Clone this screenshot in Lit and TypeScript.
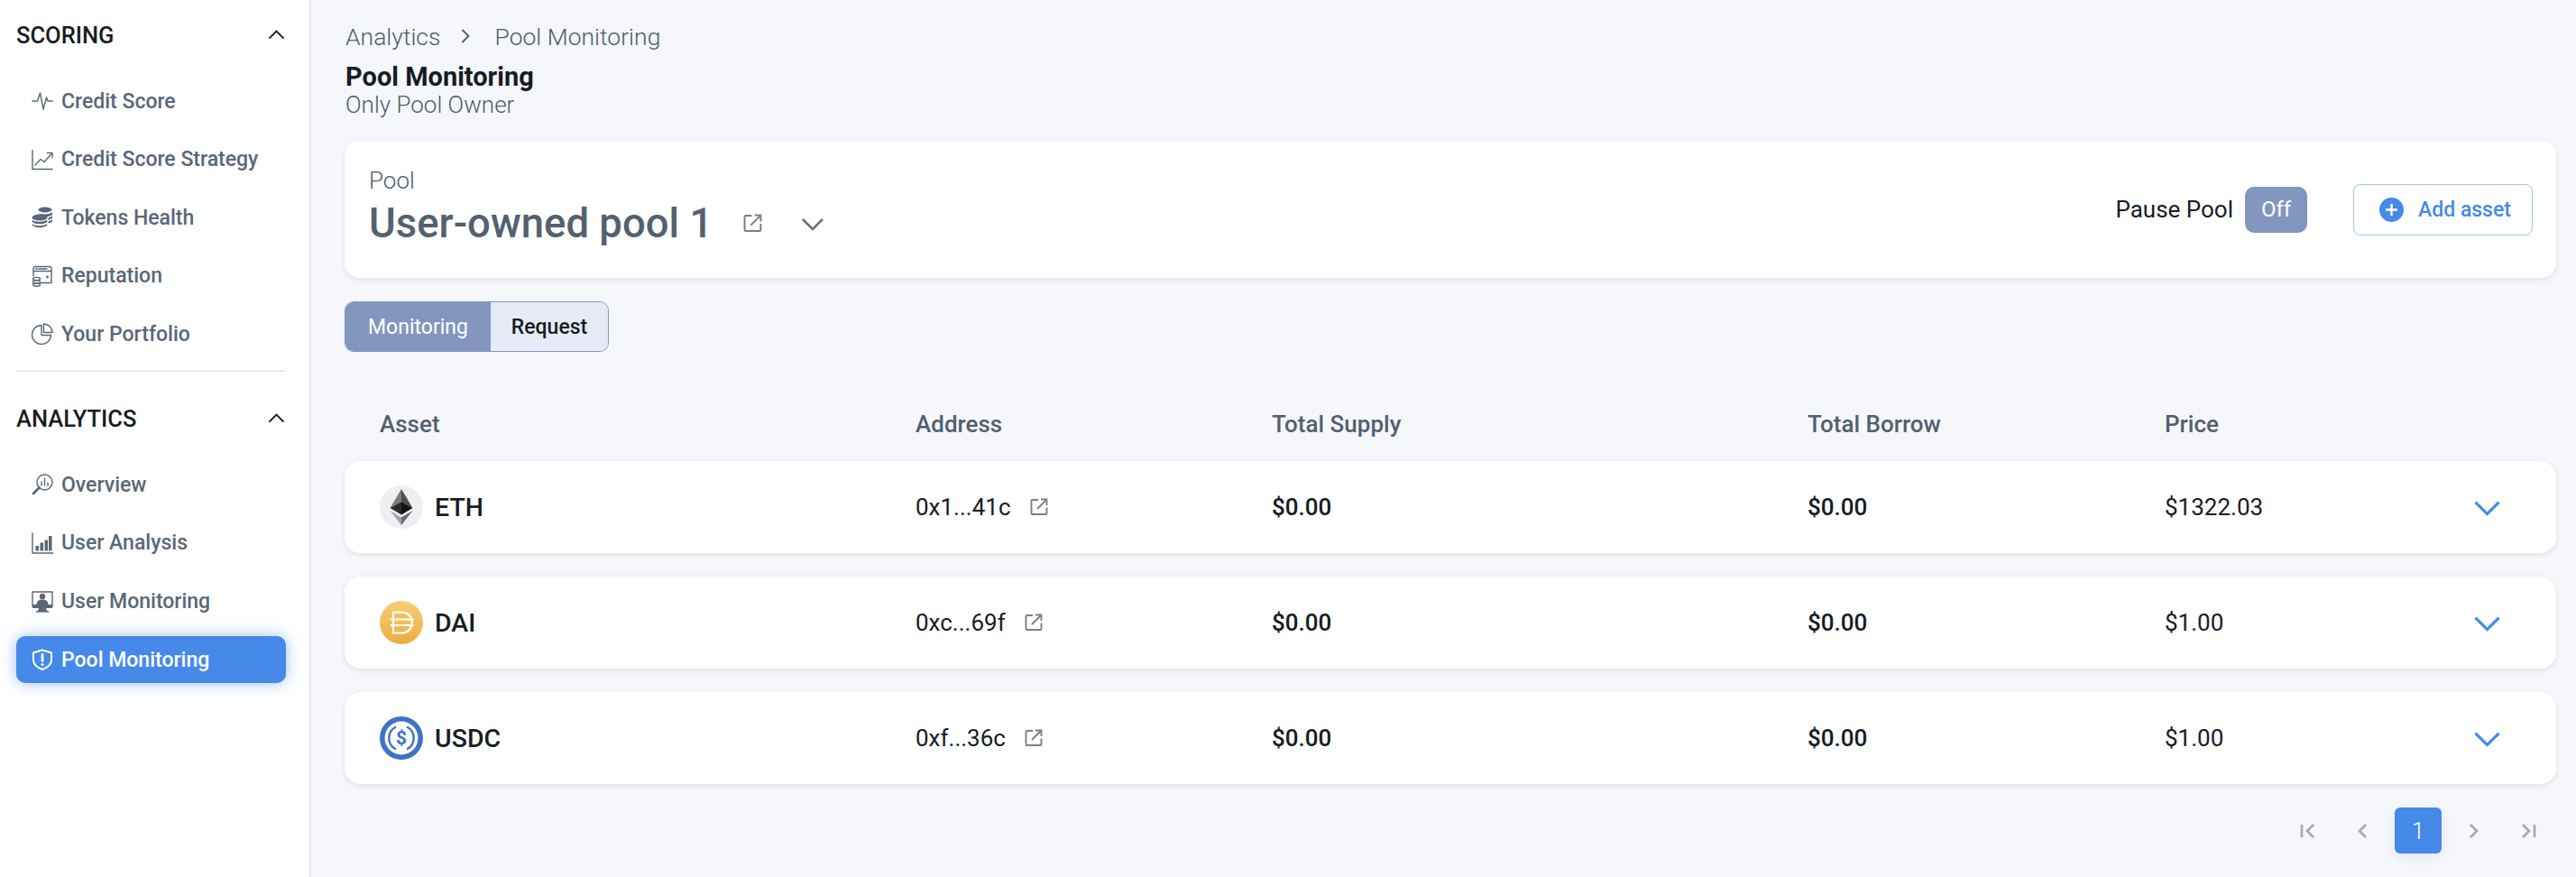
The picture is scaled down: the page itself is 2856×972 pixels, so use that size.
import { LitElement, html, css, svg } from "lit";
import { customElement } from "lit/decorators.js";

const ic = (body: unknown, cls = "ic") =>
  html`<svg class=${cls} viewBox="0 0 24 24" fill="none" stroke="currentColor" stroke-width="1.400" stroke-linecap="round" stroke-linejoin="round">${body}</svg>`;

const icons: Record<string, unknown> = {
  pulse: ic(svg`<path d="M1 12h5.500L9.500 3l3.500 18 3.500-13 1.500 4h5" />`),
  trend: ic(svg`<path d="M1 1.500v21h22" /><path d="M4 18l6-6.500 4 3L22.500 5" /><path d="M17.500 4.500h5.500v5" />`),
  coins: ic(svg`<g fill="currentColor" stroke="none"><ellipse cx="15" cy="3.500" rx="7.500" ry="3"/><path d="M7.500 7c3 2 11 2 15.500-.5v2.500c-3 2.500-8 2.500-11 2z"/><ellipse cx="9" cy="12" rx="8.500" ry="3.600"/><path d="M.8 14.500c2.500 3 12.400 3 16.400 0v2.500c-3 3-13.400 3-16.400 0z"/><path d="M.8 19c2.500 3 12.400 3 16.400 0v1.800c-3 3.300-13.400 3.300-16.400 0z"/><path d="M18.500 12.500L23 10.500v2.500l-4.500 2zM18.500 16.500L23 14.500v2.300l-4.500 2z"/></g>`),
  wallet: ic(svg`<path d="M2 12V3.500a2 2 0 0 1 2-2h16a2 2 0 0 1 2 2V19.500h-12" /><path d="M2 6.500h20" /><path d="M4.500 4h2M8 4h9" /><circle cx="17.500" cy="13" r=".7" fill="currentColor" /><ellipse cx="5.500" cy="15" rx="4" ry="1.600" /><ellipse cx="5.500" cy="18.400" rx="4" ry="1.600" /><ellipse cx="5.500" cy="21.600" rx="4" ry="1.600" />`),
  pie: ic(svg`<path d="M11 2.500a10.500 10.500 0 1 0 10.500 11H11z" /><path d="M13.500 1a9.500 9.500 0 0 1 9.500 9.500h-9.500z" />`),
  search: ic(svg`<circle cx="14.500" cy="9.500" r="8.500" /><path d="M8.500 15.500L2 22" stroke-width="2.600" /><path d="M11 13V9M14.500 13V5.500M18 13v-3" stroke-width="1.400" />`),
  bars: ic(svg`<path d="M1 1v22h23" stroke-width="1.400" /><g fill="currentColor" stroke="none"><rect x="4.500" y="15" width="3.500" height="5.500" /><rect x="9.500" y="11.500" width="3.500" height="9" /><rect x="14.500" y="8.500" width="3.500" height="12" /><rect x="19" y="4" width="3.500" height="16.500" /></g>`),
  monitor: ic(svg`<rect x="1" y="1" width="22" height="16" /><g fill="currentColor" stroke="none"><circle cx="12" cy="6" r="3.200" /><path d="M5.500 15c0-4 3-5.500 6.500-5.500s6.500 1.500 6.500 5.500z" /><rect x="1" y="15" width="22" height="4" /><path d="M8 19h8l1 3H7z" /><rect x="5" y="22" width="14" height="1.600" /></g>`),
  shield: ic(svg`<path d="M12 1.500l10 3v8c0 5-4.500 8.500-10 10.500C6.500 21 2 17.500 2 12.500v-8z" stroke-width="1.900" /><path d="M12 6.500v7" stroke-width="2.800" /><circle cx="12" cy="17.500" r="1.600" fill="currentColor" stroke="none" />`),
};

const ext = html`<svg class="ext" viewBox="0 0 20 20" fill="none" stroke="#7f7f7f" stroke-width="1.900"><path d="M9 2H2.500a1 1 0 0 0-1 1v14a1 1 0 0 0 1 1h15a1 1 0 0 0 1-1v-6.500" /><path d="M8 12L18 2M12 1.500h6.500V8" /></svg>`;

const chev = (cls: string, d = "M2 3l11 11L24 3") =>
  html`<svg class=${cls} viewBox="0 0 26 16" fill="none" stroke="currentColor" stroke-width="2.600"><path d=${d} /></svg>`;

const eth = html`<svg class="coin" viewBox="0 0 48 48"><circle cx="24" cy="24" r="24" fill="#edeff2" /><path d="M24 4L11.500 25 24 18z" fill="#7c7c7c" /><path d="M24 4l12.500 21L24 18z" fill="#4d4d4d" /><path d="M24 18l-12.500 7L24 32.500z" fill="#2a2a2a" /><path d="M24 18l12.500 7L24 32.500z" fill="#141414" /><path d="M11.500 28L24 35.500V44z" fill="#a3a3a3" /><path d="M36.500 28L24 35.500V44z" fill="#6a6a6a" /></svg>`;
const dai = html`<svg class="coin" viewBox="0 0 48 48"><defs><linearGradient id="g" x1="0" y1="0" x2="0" y2="1"><stop offset="0" stop-color="#f5cf74" /><stop offset="1" stop-color="#edae3f" /></linearGradient></defs><circle cx="24" cy="24" r="24" fill="url(#g)" /><g fill="none" stroke="#fff" stroke-width="2.200"><path d="M15 12.500h9.500a11.500 11.500 0 0 1 0 23H15z" /><path d="M11.500 20.500h26M11.500 27h26" /></g></svg>`;
const usdc = html`<svg class="coin" viewBox="0 0 48 48"><circle cx="24" cy="24" r="24" fill="#3e73c4" /><circle cx="24" cy="24" r="18.500" fill="#fff" /><g fill="none" stroke="#3e73c4" stroke-width="2.400"><path d="M18 11.500a14 14 0 0 0 0 25" /><path d="M30 11.500a14 14 0 0 1 0 25" /></g><text x="24" y="31" text-anchor="middle" font-family="Roboto, sans-serif" font-weight="700" font-size="21" fill="#3e73c4">$</text></svg>`;

const scoring = [["pulse", "Credit Score"], ["trend", "Credit Score Strategy"], ["coins", "Tokens Health"], ["wallet", "Reputation"], ["pie", "Your Portfolio"]];
const analytics = [["search", "Overview"], ["bars", "User Analysis"], ["monitor", "User Monitoring"], ["shield", "Pool Monitoring"]];
const assets = [
  { icon: eth, name: "ETH", addr: "0x1...41c", price: "$1322.03" },
  { icon: dai, name: "DAI", addr: "0xc...69f", price: "$1.00" },
  { icon: usdc, name: "USDC", addr: "0xf...36c", price: "$1.00" },
];

@customElement("app-root")
export class AppRoot extends LitElement {
  static styles = css`
    :host { display: flex; width: 2856px; height: 972px; overflow: hidden; background: #f5f7fb; font-family: Roboto, "Noto Sans", sans-serif; color: #161c24; }
    .side { height: 972px; box-sizing: border-box; background: #fff; border-right: 2px solid #e6e8ee; flex: none; padding: 20px 26px 0 18px; width: 345px; }
    .sec { display: flex; justify-content: space-between; align-items: center; height: 38px; font-size: 25.500px; font-weight: 500; }
    .up { width: 19px; height: 12px; color: #161c24; margin-right: 1px; }
    .list { display: flex; flex-direction: column; gap: 12.600px; margin-top: 28px; }
    .item { display: flex; align-items: center; gap: 9px; height: 52px; padding-left: 17px; font-size: 23px; font-weight: 500; color: #5a6778; border-radius: 10px; }
    .item.on { background: #458ae9; color: #fff; box-shadow: 0 0 16px rgba(69,138,233,.55); }
    .ic { width: 24px; height: 24px; flex: none; }
    hr { border: 0; height: 2px; background: #e8eaee; margin: 14px 0 33px; }
    .main { flex: 1; min-width: 0; padding: 24px 22px 0 37px; }
    .crumb { display: flex; align-items: center; height: 32px; font-size: 26.500px; font-weight: 300; color: #4f5b6b; padding-left: 1px; }
    .crumb svg { width: 10px; height: 16px; margin: 0 27px 0 23px; color: #4f5b6b; }
    h1 { margin: 13px 0 0; font-size: 29px; line-height: 32px; font-weight: 700; padding-left: 1px; }
    .sub { font-size: 26px; line-height: 30px; font-weight: 300; color: #4f5b6b; padding-left: 1px; }
    .card { display: flex; justify-content: space-between; align-items: center; margin-top: 25px; height: 152px; box-sizing: border-box; padding: 0 26px 0 27px; background: #fff; border-radius: 16px; box-shadow: 0 2px 6px rgba(30,40,70,.1); }
    .info { padding-bottom: 4px; }
    .lbl { font-size: 26px; font-weight: 300; color: #4f5b6b; line-height: 30px; }
    .pool { display: flex; align-items: center; margin-top: 5px; height: 56px; font-size: 45.500px; font-weight: 500; color: #536170; }
    .pool .ext { width: 21px; height: 21px; margin-left: 34px; }
    .dn { width: 26px; height: 16px; margin-left: 43px; color: #6f6f6f; }
    .right { display: flex; align-items: center; }
    .pp { font-size: 26px; font-weight: 400; margin-right: 13px; }
    .off { width: 69px; height: 51px; border-radius: 10px; background: #8296bf; color: #fff; font-size: 24px; font-weight: 400; display: flex; align-items: center; justify-content: center; }
    .add { display: flex; align-items: center; gap: 16px; margin-left: 51px; width: 199px; height: 57px; box-sizing: border-box; padding-left: 28px; border: 1.500px solid #a2c4f3; border-radius: 8px; color: #458ae9; font-size: 23px; font-weight: 500; }
    .add svg { width: 27px; height: 27px; }
    .tabs { display: flex; margin-top: 26px; width: 293px; height: 56px; box-sizing: border-box; border: 1.500px solid #8296bf; border-radius: 10px; overflow: hidden; font-size: 23px; font-weight: 500; }
    .tab { display: flex; align-items: center; justify-content: center; }
    .tab.a { width: 161px; background: #8296bf; color: #fff; font-weight: 400; }
    .tab.b { flex: 1; background: #e7ebf5; }
    .cols { display: grid; grid-template-columns: 594px 395px 594px 396px 1fr 60px; align-items: center; padding-left: 39px; padding-right: 61px; }
    .head { height: 40px; margin-top: 60px; font-size: 26px; font-weight: 500; color: #525f70; }
    .rows { display: flex; flex-direction: column; gap: 26px; margin-top: 21px; }
    .row { height: 102px; background: #fff; border-radius: 18px; box-shadow: 0 2px 6px rgba(30,40,70,.1); font-size: 26px; }
    .name { display: flex; align-items: center; gap: 13px; font-size: 28.500px; font-weight: 500; }
    .coin { width: 48px; height: 48px; flex: none; }
    .addr { display: flex; align-items: center; gap: 21px; font-weight: 400; }
    .addr .ext { width: 20px; height: 20px; }
    .val { font-weight: 500; }
    .go { width: 31px; height: 19px; color: #458ae9; justify-self: end; }
    .pag { display: flex; justify-content: flex-end; gap: 9px; margin-top: 26px; padding-right: 5px; }
    .pg { width: 52px; height: 51px; display: flex; align-items: center; justify-content: center; color: #a9a9a9; }
    .pg svg { width: 18px; height: 18px; }
    .pg.on { background: #458ae9; color: #fff; border-radius: 6px; font-size: 26px; font-weight: 300; box-shadow: 0 4px 14px rgba(30,40,70,.08); }
  `;

  private menu(items: string[][], active = "") {
    return html`<div class="list">${items.map(([i, t]) => html`<div class="item ${t === active ? "on" : ""}">${icons[i]}<span>${t}</span></div>`)}</div>`;
  }

  private pg(d: string) {
    return html`<div class="pg"><svg viewBox="0 0 18 18" fill="none" stroke="currentColor" stroke-width="2.700"><path d=${d} /></svg></div>`;
  }

  render() {
    const up = chev("up", "M2 13L13 2l11 11");
    return html`
      <aside class="side">
        <div class="sec"><span>SCORING</span>${up}</div>
        ${this.menu(scoring)}
        <hr />
        <div class="sec"><span>ANALYTICS</span>${up}</div>
        ${this.menu(analytics, "Pool Monitoring")}
      </aside>
      <main class="main">
        <div class="crumb"><span>Analytics</span><svg viewBox="0 0 10 16" fill="none" stroke="currentColor" stroke-width="1.800"><path d="M1.500 1l7 7-7 7" /></svg><span>Pool Monitoring</span></div>
        <h1>Pool Monitoring</h1>
        <div class="sub">Only Pool Owner</div>
        <section class="card">
          <div class="info">
            <div class="lbl">Pool</div>
            <div class="pool"><span>User-owned pool 1</span>${ext}${chev("dn")}</div>
          </div>
          <div class="right">
            <span class="pp">Pause Pool</span>
            <div class="off">Off</div>
            <div class="add"><svg viewBox="0 0 27 27"><circle cx="13.500" cy="13.500" r="13.500" fill="#458ae9" /><path d="M13.500 7v13M7 13.500h13" stroke="#fff" stroke-width="2.400" /></svg><span>Add asset</span></div>
          </div>
        </section>
        <div class="tabs"><div class="tab a">Monitoring</div><div class="tab b">Request</div></div>
        <div class="cols head"><span>Asset</span><span>Address</span><span>Total Supply</span><span>Total Borrow</span><span>Price</span><span></span></div>
        <div class="rows">
          ${assets.map((a) => html`
            <div class="row cols">
              <div class="name">${a.icon}<span>${a.name}</span></div>
              <div class="addr"><span>${a.addr}</span>${ext}</div>
              <div class="val">$0.00</div>
              <div class="val">$0.00</div>
              <div>${a.price}</div>
              ${chev("go")}
            </div>`)}
        </div>
        <div class="pag">
          ${this.pg("M2 2v14M15 2L8 9l7 7")}
          ${this.pg("M12 2L5 9l7 7")}
          <div class="pg on">1</div>
          ${this.pg("M6 2l7 7-7 7")}
          ${this.pg("M16 2v14M3 2l7 7-7 7")}
        </div>
      </main>
    `;
  }
}
